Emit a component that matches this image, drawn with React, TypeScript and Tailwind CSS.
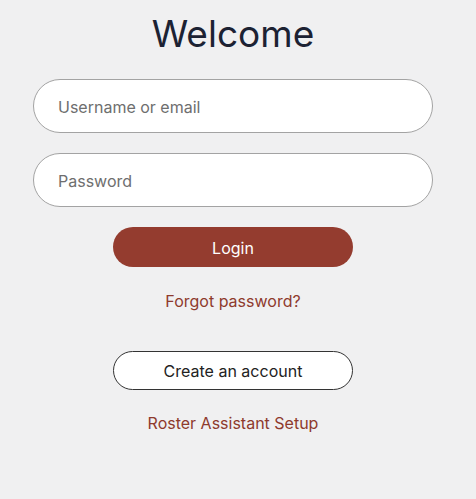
export default function App() {
  return (
    <div className="min-h-[499px] w-full bg-[#f0f0f1] font-['Inter',sans-serif]">
      <div className="flex w-[466px] flex-col items-center pt-[10px]">
        <h1 className="text-[37px] leading-[48px] font-normal text-[#1c2233]">Welcome</h1>
        <div className="mt-[21px] flex w-[400px] flex-col gap-[20px]">
          <input
            placeholder="Username or email"
            className="h-[54px] w-full rounded-full border border-[#a3a3a3] bg-white px-6 pt-[2px] text-base text-gray-900 placeholder:text-[#6e6e6e] focus:outline-none"
          />
          <input
            type="password"
            placeholder="Password"
            className="h-[54px] w-full rounded-full border border-[#a3a3a3] bg-white px-6 pt-[2px] text-base text-gray-900 placeholder:text-[#6e6e6e] focus:outline-none"
          />
        </div>
        <button className="mt-[20px] h-[40px] w-[240px] rounded-full bg-[#943c2f] pt-[2px] text-base text-white">
          Login
        </button>
        <a className="mt-[22px] text-base text-[#8e3a2d]">Forgot password?</a>
        <button className="mt-[38px] h-[39px] w-[240px] rounded-full border border-[#333333] bg-white text-base text-[#222222]">
          Create an account
        </button>
        <a className="mt-[21px] text-base text-[#8e3a2d]">Roster Assistant Setup</a>
      </div>
    </div>
  );
}
